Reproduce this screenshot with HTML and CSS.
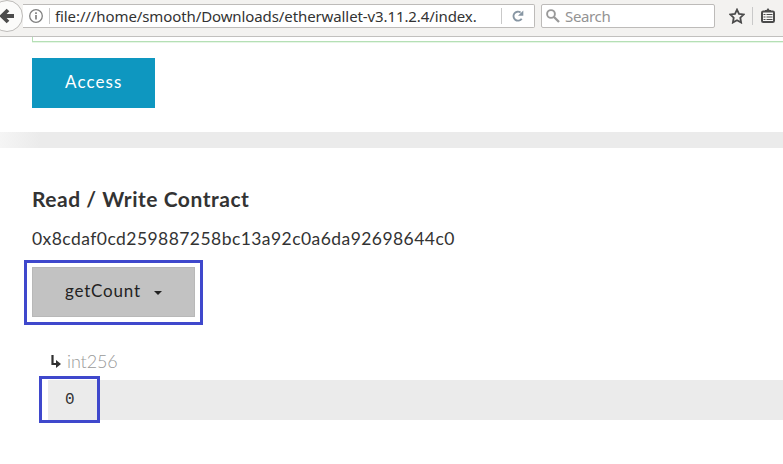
FILE: index.html
```html
<!DOCTYPE html>
<html lang="en">
<head>
<meta charset="utf-8">
<title>Read / Write Contract</title>
<link rel="stylesheet" href="styles.css">
</head>
<body>
<header class="toolbar">
  <div class="back">
    <svg width="33" height="32" viewBox="0 0 33 32"><circle cx="7" cy="16" r="15.5" fill="#fbfbfa" stroke="#bdbbb9"/><path d="M8 10 2 16l6 6M2 16h12" fill="none" stroke="#4c4c4c" stroke-width="3.8"/></svg>
  </div>
  <div class="address">
    <svg class="info" width="14" height="14" viewBox="0 0 14 14"><circle cx="7" cy="7" r="6.3" fill="none" stroke="#808080" stroke-width="1.3"/><path d="M7 6v4.5M7 3.2v1.7" stroke="#808080" stroke-width="1.7"/></svg>
    <span class="divider"></span>
    <span class="url">file:///home/smooth/Downloads/etherwallet-v3.11.2.4/index.</span>
    <span class="divider reload-divider"></span>
    <svg class="reload" width="12" height="12" viewBox="0 0 12 12"><path d="M8.6 2.5A4.5 4.5 0 1 0 9.7 8.7" fill="none" stroke="#8796a3" stroke-width="1.9"/><path d="M11.3.4v5.4H6z" fill="#8796a3"/></svg>
  </div>
  <div class="search">
    <svg width="14" height="14" viewBox="0 0 14 14"><circle cx="5" cy="5" r="3.9" fill="none" stroke="#999" stroke-width="1.9"/><path d="m8 8 5 5" stroke="#999" stroke-width="2.3"/></svg>
    <span>Search</span>
  </div>
  <svg class="star" width="16" height="16" viewBox="0 0 16 16"><path d="m8 1.6 2 4.2 4.700.6-3.400 3.300.8 4.800L8 12.200l-4.100 2.300.8-4.800L1.300 6.400 6 5.800z" fill="none" stroke="#4b4b4b" stroke-width="1.8"/></svg>
  <span class="divider tool-divider"></span>
  <svg class="clipboard" width="14" height="15" viewBox="0 0 14 15"><path d="M4 3V2h1.500L7 0l1.500 2H10v1z" fill="#4b4b4b"/><rect x="1" y="3.500" width="12" height="10.500" rx="1.200" fill="#f8f8f7" stroke="#4b4b4b" stroke-width="2"/><path d="M2.500 6.500h2m1 0h6m-9 2.500h2m1 0h6m-9 2.500h2m1 0h6" stroke="#4b4b4b" stroke-width="1.100"/></svg>
</header>
<main>
  <section class="access-panel">
    <div class="json-field"></div>
    <button class="btn primary">Access</button>
  </section>
  <section class="contract">
    <h4>Read / Write Contract</h4>
    <p class="hash">0x8cdaf0cd259887258bc13a92c0a6da92698644c0</p>
    <div class="highlight method"><button class="btn select">getCount<span class="caret"></span></button></div>
    <div class="result">
      <p class="type"><svg width="10" height="14" viewBox="0 0 10 14"><path d="M1.500 1v9H6" fill="none" stroke="#303030" stroke-width="2.200"/><path d="m5 6 5 4-5 4z" fill="#303030"/></svg><span>int256</span></p>
      <div class="output"><span>0</span><i class="output-highlight"></i></div>
    </div>
  </section>
</main>
</body>
</html>
```
FILE: styles.css
```css
* { box-sizing: border-box; }
body { margin: 0; height: 464px; overflow: hidden; background: #fff; color: #333; font-family: Lato, sans-serif; }
svg { display: block; flex: none; }
.toolbar { height: 37px; display: flex; align-items: flex-start; background: #f3f2f0; border-bottom: 1px solid #c1c0be; font-family: "Noto Sans", sans-serif; }
.back { width: 23px; height: 32px; z-index: 1; }
.address { width: 512px; height: 24px; margin-top: 4px; border: 1px solid #bdbbb9; border-left: 0; border-radius: 0 2px 2px 0; background: #fff; display: flex; align-items: center; }
.info { margin-left: 6px; }
.divider { width: 1px; height: 16px; background: #c9c9c9; flex: none; }
.info + .divider { margin-left: 6px; }
.url { width: 446px; margin-left: 5px; font-size: 15px; line-height: 22px; letter-spacing: -.1px; white-space: nowrap; color: #333; }
.reload { margin-left: 10px; }
.search { width: 174px; height: 24px; margin: 4px 0 0 6px; border: 1px solid #bdbbb9; border-radius: 2px; background: #fff; display: flex; align-items: center; padding-left: 4px; gap: 5px; color: #939393; font-size: 15px; line-height: 22px; letter-spacing: -.35px; }
.star { margin: 8px 0 0 14px; }
.tool-divider { height: 18px; margin: 7px 0 0 7px; }
.clipboard { margin: 8px 0 0 8px; }
.access-panel { height: 111px; padding-left: 32px; border-bottom: 16px solid #ebebeb; border-image: linear-gradient(90deg, #f5f5f5, #ebebeb 40px) 0 0 16 0; }
.json-field { height: 5px; border: solid #b5dfb5; border-width: 0 0 1px 1px; box-shadow: 0 1px #e6f6e6; }
.btn { display: flex; align-items: center; height: 50px; border: 0; padding: 0 33px 2px; font: 17px/24px Lato, sans-serif; letter-spacing: 1.1px; }
.primary { width: 123px; margin-top: 16px; background: #0e97c0; color: #fff; }
.contract { padding: 37px 0 0 32px; }
h4 { margin: 0; font-size: 21px; line-height: 28px; font-weight: 700; letter-spacing: .53px; }
.hash { margin: 13px 0 0; font-size: 17.5px; line-height: 26px; letter-spacing: .44px; }
.highlight { border: 3px solid #3f48cc; }
.method { width: 179px; height: 65px; margin: 8px 0 0 -8px; padding: 4px 5px; }
.select { width: 163px; background: #c2c2c2; border: 1px solid #b8b8b8; padding: 0 32px 2px; color: #222; letter-spacing: .8px; }
.caret { margin: 4px 0 0 13px; border: 4px solid transparent; border-top-color: #222; border-bottom: 0; }
.result { margin: 23px 0 0 16px; }
.type { height: 26px; margin: 0; padding-left: 3px; display: flex; align-items: center; gap: 6px; color: #999; font-size: 18px; line-height: 26px; font-weight: 300; letter-spacing: -.1px; }
.output { position: relative; height: 40px; margin-top: 6px; padding: 8px 17px; background: #ebebeb; font: 16px/24px "Liberation Mono", monospace; }
.output-highlight { position: absolute; left: -9px; top: -4px; width: 61px; height: 47px; border: 3px solid #3f48cc; }
```
